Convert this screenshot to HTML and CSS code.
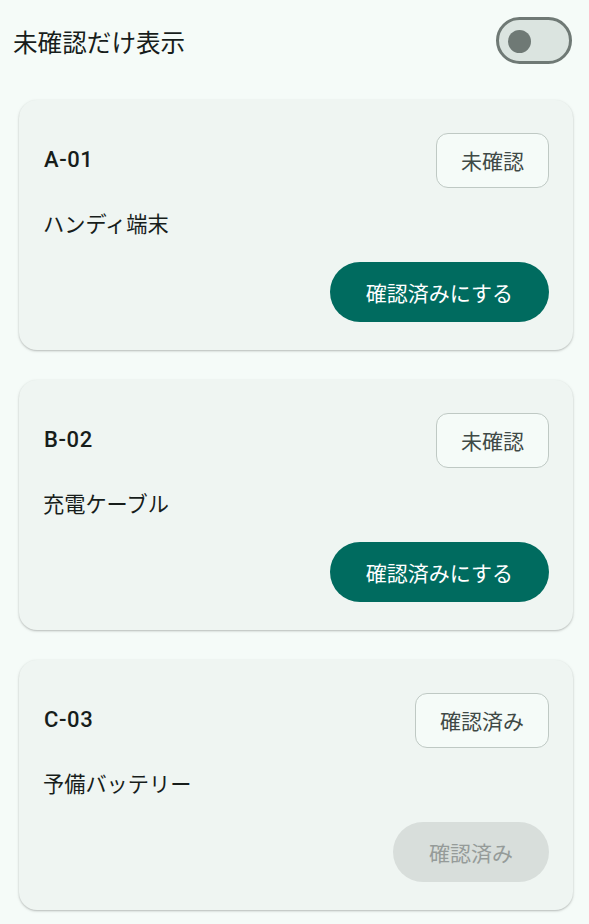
FILE: index.html
```html
<!DOCTYPE html>
<html lang="ja">
<head>
<meta charset="utf-8">
<title>確認リスト</title>
<link rel="stylesheet" href="styles.css">
</head>
<body>
<div class="screen">
  <div class="header">
    <span class="header-title">未確認だけ表示</span>
    <div class="switch" role="switch" aria-checked="false"><span class="knob"></span></div>
  </div>
  <div class="list">
    <div class="card">
      <div class="card-row">
        <span class="item-id">A-01</span>
        <span class="chip">未確認</span>
      </div>
      <div class="item-name">ハンディ端末</div>
      <div class="action-row">
        <button class="btn btn-primary">確認済みにする</button>
      </div>
    </div>
    <div class="card">
      <div class="card-row">
        <span class="item-id">B-02</span>
        <span class="chip">未確認</span>
      </div>
      <div class="item-name">充電ケーブル</div>
      <div class="action-row">
        <button class="btn btn-primary">確認済みにする</button>
      </div>
    </div>
    <div class="card">
      <div class="card-row">
        <span class="item-id">C-03</span>
        <span class="chip">確認済み</span>
      </div>
      <div class="item-name">予備バッテリー</div>
      <div class="action-row">
        <button class="btn btn-disabled" disabled>確認済み</button>
      </div>
    </div>
  </div>
</div>
</body>
</html>
```
FILE: styles.css
```css
* { box-sizing: border-box; }
html, body {
  margin: 0;
  padding: 0;
  background: #F5FBF8;
}
body {
  font-family: Roboto, "Noto Sans CJK JP", sans-serif;
  color: #171D1B;
  width: 589px;
  min-height: 924px;
}
.screen {
  display: flex;
  flex-direction: column;
}
.header {
  display: flex;
  align-items: center;
  justify-content: space-between;
  height: 60px;
  margin-top: 12px;
  padding: 0 17px 0 12px;
}
.header-title {
  font-size: 24.6px;
  line-height: 32px;
  margin-top: 3px;
  margin-left: 1px;
}
.switch {
  position: relative;
  width: 76px;
  height: 47px;
  border: 3px solid #6F7975;
  border-radius: 24px;
  background: #DBE4E0;
  margin-top: -3px;
}
.knob {
  position: absolute;
  left: 9px;
  top: 9.5px;
  width: 23px;
  height: 23px;
  border-radius: 50%;
  background: #6F7975;
}
.list {
  display: flex;
  flex-direction: column;
  gap: 30px;
  margin-top: 28px;
  padding: 0 16px 0 19px;
}
.card {
  height: 250px;
  background: #EFF5F2;
  border-radius: 18px;
  box-shadow: 0 1px 2px rgba(0, 0, 0, 0.22), 0 1px 4px rgba(0, 0, 0, 0.06);
  padding: 24px 24px 22px 24px;
  display: flex;
  flex-direction: column;
}
.card-row {
  display: flex;
  align-items: center;
  justify-content: space-between;
  height: 72px;
}
.item-id {
  font-size: 22px;
  font-weight: 500;
  line-height: 30px;
  letter-spacing: 0.6px;
  margin-left: 1px;
}
.chip {
  display: flex;
  align-items: center;
  height: 55px;
  padding: 0 24px;
  border: 1.5px solid #BFC9C4;
  border-radius: 12px;
  background: #F5FBF8;
  color: #3F4946;
  font-size: 21px;
  font-weight: 400;
}
.item-name {
  margin-top: 14px;
  font-size: 21.2px;
  line-height: 30px;
  height: 30px;
}
.action-row {
  display: flex;
  justify-content: flex-end;
  align-items: center;
  height: 72px;
  margin-top: 16px;
}
.btn {
  height: 60px;
  padding: 0 36px;
  border: none;
  border-radius: 30px;
  font-family: Roboto, "Noto Sans CJK JP", sans-serif;
  font-size: 21px;
  font-weight: 400;
}
.btn-primary {
  background: #006B5F;
  color: #FFFFFF;
}
.btn-disabled {
  background: #D8DEDB;
  color: #959B99;
}
```
